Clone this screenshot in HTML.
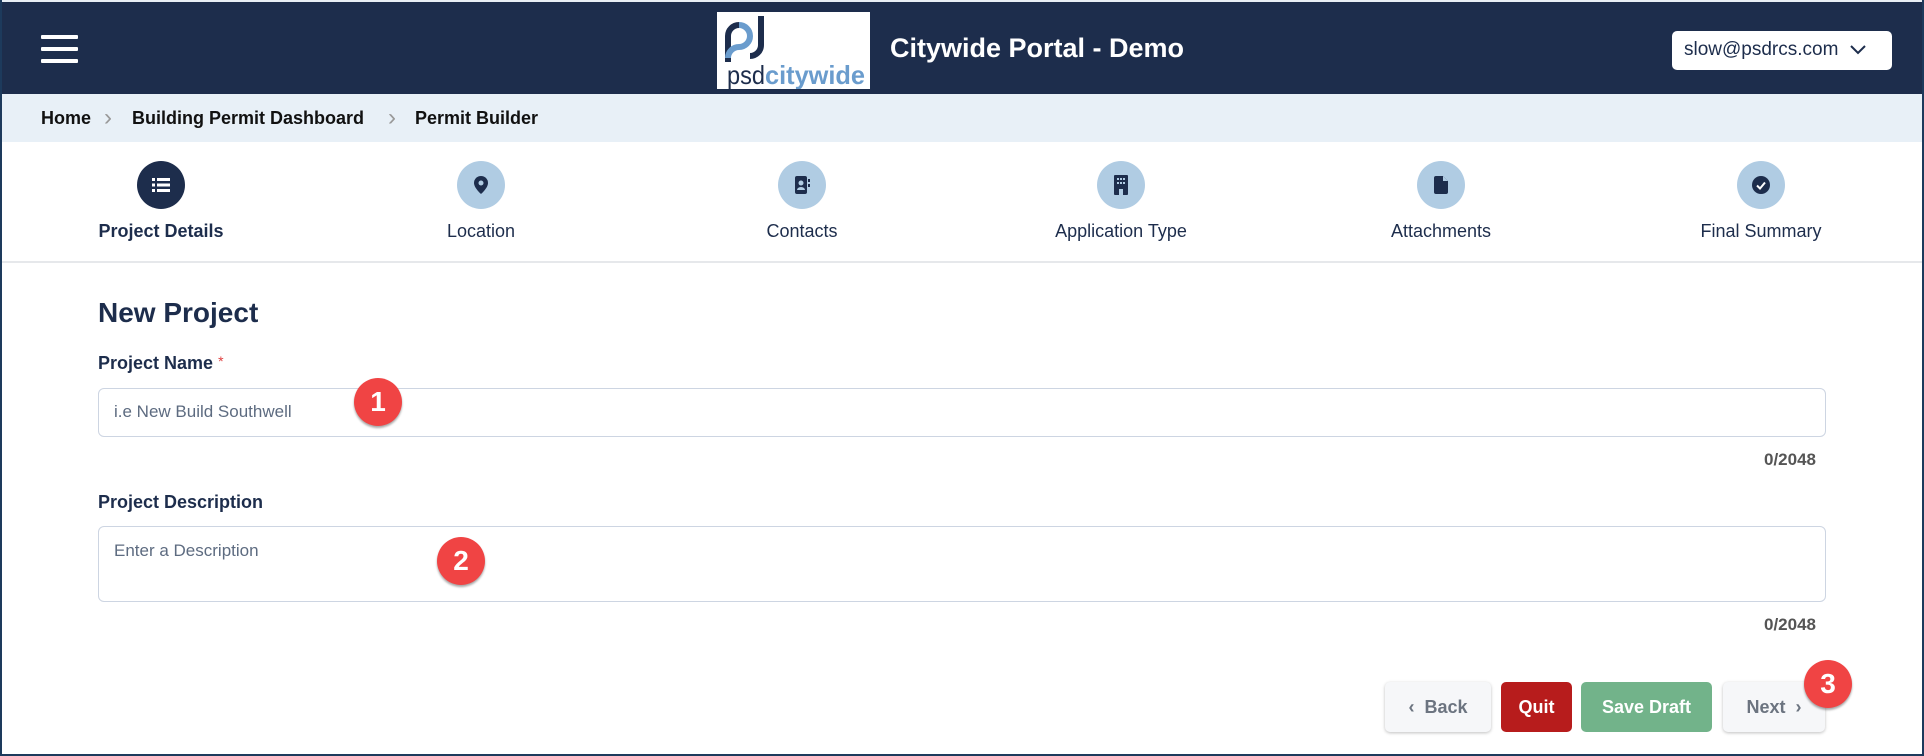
<!DOCTYPE html>
<html><head><meta charset="utf-8"><style>
*{box-sizing:border-box;margin:0;padding:0}
body{width:1924px;height:756px;overflow:hidden;background:#fff;font-family:"Liberation Sans",sans-serif;position:relative;color:#1d2d4c}
.frame{position:absolute;inset:0;border:2px solid #1d3a5c;border-top:none;pointer-events:none;z-index:5}
.hdr{position:absolute;left:0;top:0;width:1924px;height:94px;background:#1d2d4c;border-top:2px solid #e8eef5}
.ham{position:absolute;left:41px;width:37px;height:4px;background:#fff;border-radius:1px}
.logo{position:absolute;left:717px;top:10px;width:153px;height:77px;background:#fff}
.title{position:absolute;left:890px;top:31px;color:#fff;font-size:27px;font-weight:bold}
.email{position:absolute;left:1672px;top:29px;width:220px;height:39px;background:#fff;border-radius:5px;font-size:19px;color:#1d2d4c;padding:8px 0 0 12px}
.bc{position:absolute;left:0;top:94px;width:1924px;height:48px;background:#e8f0f7;font-size:18px;font-weight:bold;color:#111}
.bc span{position:absolute;top:14px}
.steps{position:absolute;left:0;top:142px;width:1924px;height:121px;border-bottom:2px solid #e6e8eb}
.st{position:absolute;top:19px;width:300px;margin-left:-150px;text-align:center;font-size:18px;color:#1d2d4c}
.c{width:48px;height:48px;border-radius:50%;background:#b0cce3;margin:0 auto 12px;display:flex;align-items:center;justify-content:center}
.h1{position:absolute;left:98px;top:297px;font-size:28px;font-weight:bold}
.lbl{position:absolute;left:98px;font-size:18px;font-weight:bold}
.inp{position:absolute;left:98px;width:1728px;border:1.5px solid #cdd5e2;border-radius:6px;font-size:17px;color:#5d6b80;padding-left:15px}
.cnt{position:absolute;right:108px;font-size:17px;font-weight:bold;color:#555}
.badge{position:absolute;width:48px;height:48px;border-radius:50%;background:#f04444;color:#fff;font-weight:bold;font-size:28px;text-align:center;line-height:48px;box-shadow:0 2px 2px rgba(0,0,0,.35)}
.btn{position:absolute;top:682px;height:50px;border-radius:5px;font-size:18px;font-weight:bold;text-align:center;line-height:50px}
</style></head><body>
<div class="hdr">
<div class="ham" style="top:33px"></div><div class="ham" style="top:45px"></div><div class="ham" style="top:57px"></div>
<div class="logo"><svg width="153" height="77" viewBox="0 0 153 77">
<path d="M11 50 V24 a11 11 0 0 1 11-11" stroke="#1d2d4c" stroke-width="6" fill="none"/>
<path d="M22 13 a11 11 0 0 1 0 22 a11 11 0 0 0-11 11" stroke="#6a9ccd" stroke-width="6" fill="none"/>
<path d="M44 4 V33 a11 11 0 0 1-11 11" stroke="#1d2d4c" stroke-width="6" fill="none"/>
<text x="10" y="72" font-family="Liberation Sans" font-size="26" fill="#1d2d4c" textLength="38" lengthAdjust="spacingAndGlyphs">psd</text>
<text x="48" y="72" font-family="Liberation Sans" font-weight="bold" font-size="26" fill="#6a9ccd" textLength="100" lengthAdjust="spacingAndGlyphs">citywide</text></svg></div>
<div class="title">Citywide Portal - Demo</div>
<div class="email">slow@psdrcs.com <svg width="16" height="10" style="margin-left:6px" viewBox="0 0 16 10"><path d="M1 1 L8 8 L15 1" stroke="#1d2d4c" stroke-width="2" fill="none"/></svg></div>
</div>
<div class="bc"><span style="left:41px">Home</span><span style="left:104px;top:10px;color:#999;font-weight:normal;font-size:24px">&#x203A;</span><span style="left:132px">Building Permit Dashboard</span><span style="left:388px;top:10px;color:#999;font-weight:normal;font-size:24px">&#x203A;</span><span style="left:415px">Permit Builder</span></div>
<div class="steps">
<div class="st" style="left:161px;font-weight:bold"><div class="c" style="background:#1d2d4c"><svg width="18" height="16"><g fill="#fff"><rect x="0" y="1" width="3" height="3"/><rect x="5" y="1" width="13" height="3"/><rect x="0" y="6.5" width="3" height="3"/><rect x="5" y="6.5" width="13" height="3"/><rect x="0" y="12" width="3" height="3"/><rect x="5" y="12" width="13" height="3"/></g></svg></div>Project Details</div>
<div class="st" style="left:481px"><div class="c"><svg width="14" height="18" viewBox="0 0 14 18"><path d="M7 0a7 7 0 0 1 7 7c0 5-7 11-7 11S0 12 0 7a7 7 0 0 1 7-7z" fill="#1d2d4c"/><circle cx="7" cy="7" r="2.5" fill="#b0cce3"/></svg></div>Location</div>
<div class="st" style="left:802px"><div class="c"><svg width="16" height="18"><rect x="1" y="0" width="12" height="18" rx="2" fill="#1d2d4c"/><circle cx="7" cy="7" r="2.5" fill="#b0cce3"/><path d="M3 14a4 3 0 0 1 8 0z" fill="#b0cce3"/><rect x="14" y="3" width="2" height="3" fill="#1d2d4c"/><rect x="14" y="8" width="2" height="3" fill="#1d2d4c"/></svg></div>Contacts</div>
<div class="st" style="left:1121px"><div class="c"><svg width="14" height="20"><rect x="0" y="0" width="14" height="20" rx="1" fill="#1d2d4c"/><g fill="#b0cce3"><rect x="3" y="3" width="2" height="2"/><rect x="6" y="3" width="2" height="2"/><rect x="9" y="3" width="2" height="2"/><rect x="3" y="7" width="2" height="2"/><rect x="6" y="7" width="2" height="2"/><rect x="9" y="7" width="2" height="2"/><rect x="5" y="14" width="4" height="6"/></g></svg></div>Application Type</div>
<div class="st" style="left:1441px"><div class="c"><svg width="14" height="18"><path d="M0 2a2 2 0 0 1 2-2h7l5 5v11a2 2 0 0 1-2 2H2a2 2 0 0 1-2-2z" fill="#1d2d4c"/><path d="M9 0v5h5" fill="#b0cce3"/></svg></div>Attachments</div>
<div class="st" style="left:1761px"><div class="c"><svg width="18" height="18"><circle cx="9" cy="9" r="9" fill="#1d2d4c"/><path d="M5 9.5l3 3 5-6" stroke="#fff" stroke-width="2" fill="none"/></svg></div>Final Summary</div>
</div>
<div class="h1">New Project</div>
<div class="lbl" style="top:353px">Project Name <span style="color:#e04040;font-weight:normal;font-size:14px;vertical-align:top">*</span></div>
<div class="inp" style="top:388px;height:49px;line-height:46px">i.e New Build Southwell</div>
<div class="cnt" style="top:450px">0/2048</div>
<div class="lbl" style="top:492px">Project Description</div>
<div class="inp" style="top:526px;height:76px;padding-top:14px">Enter a Description</div>
<div class="cnt" style="top:615px">0/2048</div>
<div class="badge" style="left:354px;top:378px">1</div>
<div class="badge" style="left:437px;top:537px">2</div>
<div class="btn" style="left:1385px;width:106px;background:#f6f7f9;color:#6c7480;box-shadow:0 1px 3px rgba(0,0,0,.25)">&#x2039;&nbsp;&nbsp;Back</div>
<div class="btn" style="left:1501px;width:71px;background:#b71c1c;color:#fff">Quit</div>
<div class="btn" style="left:1581px;width:131px;background:#72b38a;color:#fff">Save Draft</div>
<div class="btn" style="left:1723px;width:102px;background:#f6f7f9;color:#6c7480;box-shadow:0 1px 3px rgba(0,0,0,.25)">Next&nbsp;&nbsp;&#x203A;</div>
<div class="badge" style="left:1804px;top:660px">3</div>
<div class="frame"></div>
</body></html>
